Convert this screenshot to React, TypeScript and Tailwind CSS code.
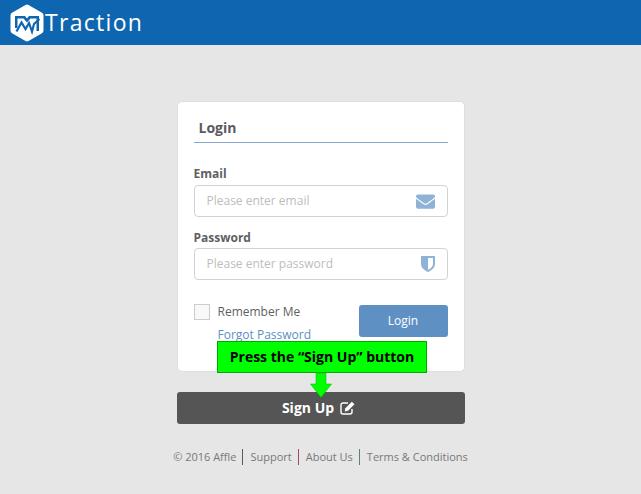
import { FaEnvelope } from 'react-icons/fa';

function Logo() {
  return (
    <svg width="34" height="38" viewBox="0 0 34 38" className="shrink-0">
      <path
        d="M15.5 1 a3 3 0 0 1 3 0 L32 8.8 a3 3 0 0 1 1.5 2.6 V26.6 a3 3 0 0 1 -1.5 2.6 L18.500 37 a3 3 0 0 1 -3 0 L2 29.200 a3 3 0 0 1 -1.500 -2.600 V11.400 a3 3 0 0 1 1.500 -2.600 Z"
        fill="#fff"
      />
      <path d="M5 12 H15 L17 14.500 L19 12 H29 V27 H26.500 V14.500 H20.500 L17 18.500 L13.500 14.500 H7.500 V24 H5 Z" fill="#0f66b0" />
      <path d="M6.500 27.500 L11.500 18.500 L15.500 25 L19 19 L22 27.500 L24 20 L29.500 15" fill="none" stroke="#0f66b0" strokeWidth="2.200" />
    </svg>
  );
}

function ShieldIcon() {
  return (
    <svg width="14" height="16" viewBox="0 0 14 16">
      <path d="M0 0 H14 V8 C14 12 10 14.500 7 16 C4 14.500 0 12 0 8 Z" fill="#8fb3d6" />
      <path d="M7 2 H12 V8 C12 10.500 9.500 12.500 7 14 Z" fill="#fff" />
    </svg>
  );
}

function EditIcon() {
  return (
    <svg width="15" height="14" viewBox="0 0 15 14" className="ml-[6px]">
      <path d="M8 2 H3 A2 2 0 0 0 1 4 V11 A2 2 0 0 0 3 13 H10 A2 2 0 0 0 12 11 V8" fill="none" stroke="#fff" strokeWidth="1.400" />
      <path d="M11.800 0.800 L14.500 3.300 L8 9.800 L4.800 10.400 L5.400 7.200 Z" fill="#fff" />
    </svg>
  );
}

export default function App() {
  return (
    <div className="relative h-[494px] w-[641px] overflow-hidden bg-[#e6e6e6] font-['Open_Sans',sans-serif] text-[#58595b]">
      <header className="flex h-[45px] items-center bg-[#0f66b0] pl-[10px]">
        <Logo />
        <span className="ml-px text-[23px] leading-none tracking-[1.3px] text-white">Traction</span>
      </header>

      <main className="mx-auto mt-14 flex w-[288px] flex-col">
        <div className="h-[271px] rounded-[5px] border border-[#dedede] bg-white px-4 pt-4">
          <h1 className="h-[25px] border-b border-[#85a9cf] pl-[5px] text-sm leading-5 font-bold text-[#5b5b5f]">Login</h1>

          <label className="mt-[23px] block text-xs leading-4 font-bold text-[#5f5f5f]">Email</label>
          <div className="mt-[3px] flex h-8 items-center justify-between rounded-[4px] border border-[#d2d2d2] pr-[12px] pl-3 text-xs">
            <span className="text-[#bdbdbd]">Please enter email</span>
            <FaEnvelope className="text-[19px] text-[#8fb3d6]" />
          </div>

          <label className="mt-[13px] block text-xs leading-4 font-bold text-[#5f5f5f]">Password</label>
          <div className="mt-[2px] flex h-8 items-center justify-between rounded-[4px] border border-[#d2d2d2] pr-[12px] pl-3 text-xs">
            <span className="text-[#bdbdbd]">Please enter password</span>
            <ShieldIcon />
          </div>

          <div className="mt-[25px] flex justify-between">
            <div>
              <div className="-mt-[1px] flex items-center">
                <span className="h-4 w-4 border border-[#cccccc] bg-[#f8f8f8]" />
                <span className="ml-2 text-xs text-[#5f5f5f]">Remember Me</span>
              </div>
              <a className="mt-[7px] ml-6 block text-xs text-[#5b8fc4]">Forgot Password</a>
            </div>
            <button className="h-8 w-[89px] rounded-[3px] bg-[#5f90c3] text-xs text-white">Login</button>
          </div>
        </div>

        <button className="mt-5 flex h-8 items-center justify-center rounded-[3px] bg-[#555555] pr-[4px] text-sm font-bold text-white">
          Sign Up
          <EditIcon />
        </button>

        <footer className="mt-[25px] flex justify-center whitespace-nowrap text-[11px] leading-4 text-[#77787b]">
          <span>© 2016 Affle</span>
          <span className="mr-[7px] ml-[6px] border-l border-[#58595b]" />
          <span>Support</span>
          <span className="mr-[7px] ml-[6px] border-l border-[#a8485c]" />
          <span>About Us</span>
          <span className="mr-[7px] ml-[6px] border-l border-[#4f8a6a]" />
          <span>Terms &amp; Conditions</span>
        </footer>
      </main>

      {/* annotation over the form */}
      <div className="absolute top-[341px] left-[217px] flex h-8 w-[210px] items-center justify-center border border-[#00a800] bg-[#00ff00] text-sm font-bold text-black">
        Press the “Sign Up” button
      </div>
      <svg className="absolute top-[373px] left-[310px]" width="22" height="25" viewBox="0 0 22 25">
        <path d="M6 0 H16 V11 H21.500 L11 24.500 L0.500 11 H6 Z" fill="#00ff00" stroke="#00b000" strokeWidth="0.500" />
      </svg>
    </div>
  );
}
